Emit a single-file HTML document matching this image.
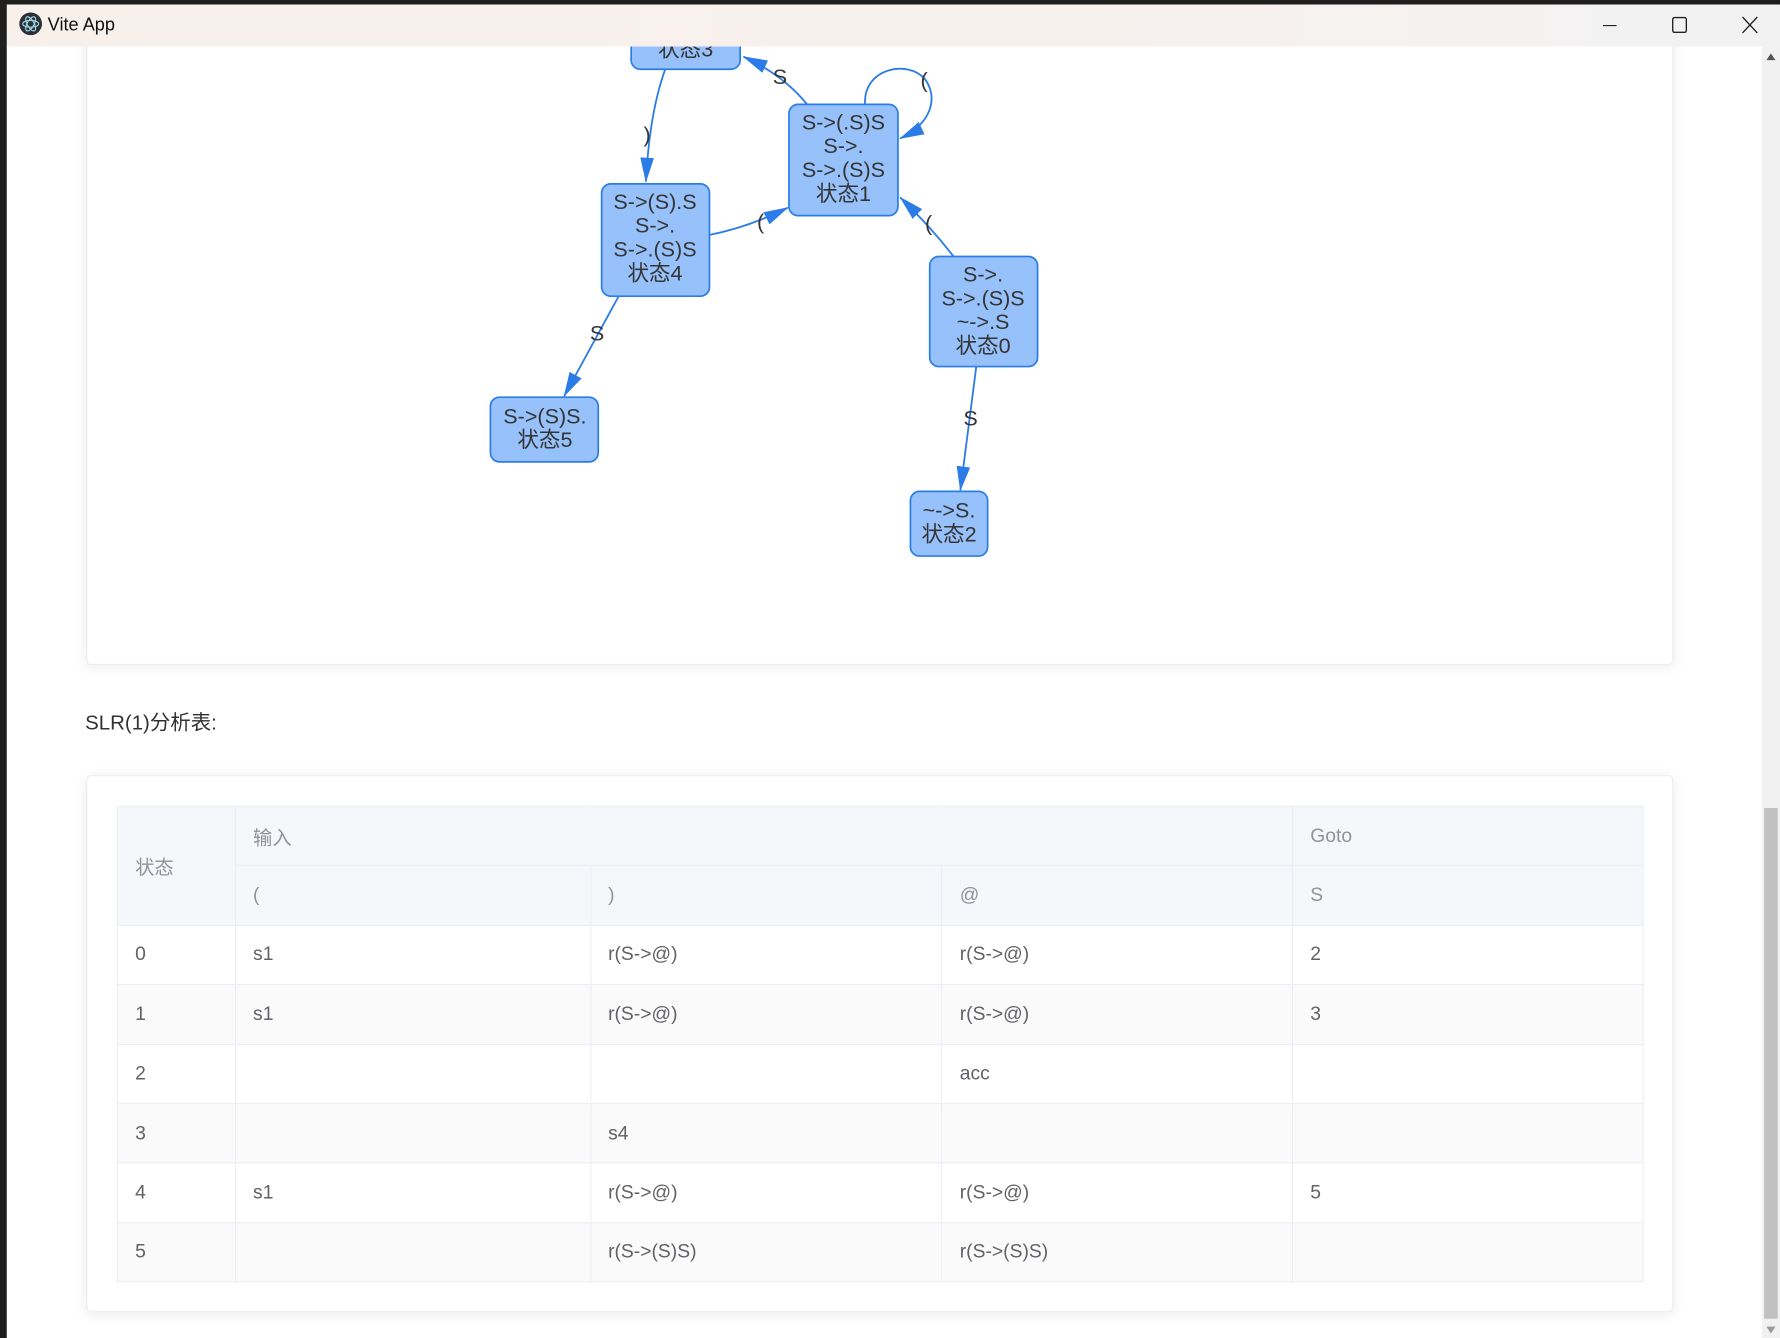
<!DOCTYPE html>
<html><head><meta charset="utf-8">
<style>
*{margin:0;padding:0;box-sizing:border-box}
html,body{width:1780px;height:1338px;overflow:hidden;background:#222}
#s{position:absolute;left:0;top:0;width:1568px;height:1179px;transform:scale(1.13520,1.13486);transform-origin:0 0;font-family:"Liberation Sans","Noto Sans CJK SC",sans-serif;background:#1f1f1f}
#win{position:absolute;left:6px;top:4px;right:0;bottom:0;background:#fff;overflow:hidden}
#title{position:absolute;left:0;top:0;right:0;height:37px;background:linear-gradient(90deg,#f8f0eb,#f7f1ee 60%,#f2f2f3);}
#title .t{position:absolute;left:36px;top:10px;font-size:16px;color:#111}
#title .ic{position:absolute;left:11px;top:7px;width:20px;height:20px;border-radius:50%;background:#2b2f36}
.ctl{position:absolute;top:0;height:37px;width:40px;color:#222}
#main{position:absolute;left:0;top:37px;right:16px;bottom:0;background:#fff}
.card{position:absolute;left:70px;width:1398px;background:#fff;border:1px solid #ebeef5;border-radius:4px;box-shadow:0 2px 12px rgba(0,0,0,.08)}
#sb{position:absolute;right:0;top:37px;width:16px;bottom:0;background:#f1f1f1}
#sb .th{position:absolute;left:2px;right:2px;top:671px;height:450px;background:#c1c1c1}
table{position:absolute;left:26px;top:26px;width:1345px;border-collapse:collapse;font-size:17px;font-family:"Liberation Sans","Noto Sans CJK SC",sans-serif}
td,th{border:1px solid #ebeef5;text-align:left;font-weight:normal;padding:0 0 0 15px;height:52.4px;color:#606266}
th{background:#f5f7fa;color:#909399}
tr.st td{background:#fafafa}
svg text{font-family:"Liberation Sans","Noto Sans CJK SC",sans-serif}
</style></head><body>
<div id="s">
<div id="win">
<div id="main">
 <div class="card" style="top:-40px;height:585px">
 <svg width="1398" height="585" style="position:absolute;left:-1px;top:-1px" viewBox="76 1 1398 585">
  <defs><marker id="a" markerWidth="22" markerHeight="12" refX="21" refY="6" orient="auto" markerUnits="userSpaceOnUse"><path d="M0,0 L22,6 L0,12 Z" fill="#2b7ce9"/></marker></defs>
  <g fill="none" stroke="#2b7ce9" stroke-width="1.6">
   <path d="M586,61 Q572,100 569,160" marker-end="url(#a)"/>
   <path d="M711,92 Q690,66 655,50" marker-end="url(#a)"/>
   <path d="M762,92 C760,60 800,52 815,70 C826,85 822,108 793,122" marker-end="url(#a)"/>
   <path d="M625,207 Q660,200 694,183" marker-end="url(#a)"/>
   <path d="M840,226 Q820,200 793,174" marker-end="url(#a)"/>
   <path d="M545,261 L497,349" marker-end="url(#a)"/>
   <path d="M860,323 L846,432" marker-end="url(#a)"/>
  </g>
  <g font-size="19" fill="#343434" text-anchor="middle">
   <rect x="556" y="10" width="96" height="51" rx="8" fill="#97c1fb" stroke="#2b7ce9" stroke-width="1.5"/>
   <text x="604" y="50">状态3</text>
   <rect x="695" y="92" width="96" height="98" rx="8" fill="#97c1fb" stroke="#2b7ce9" stroke-width="1.5"/>
   <text x="743" y="114">S-&gt;(.S)S</text><text x="743" y="135">S-&gt;.</text><text x="743" y="156">S-&gt;.(S)S</text><text x="743" y="177">状态1</text>
   <rect x="530" y="162" width="95" height="99" rx="8" fill="#97c1fb" stroke="#2b7ce9" stroke-width="1.5"/>
   <text x="577" y="184">S-&gt;(S).S</text><text x="577" y="205">S-&gt;.</text><text x="577" y="226">S-&gt;.(S)S</text><text x="577" y="247">状态4</text>
   <rect x="819" y="226" width="95" height="97" rx="8" fill="#97c1fb" stroke="#2b7ce9" stroke-width="1.5"/>
   <text x="866" y="248">S-&gt;.</text><text x="866" y="269">S-&gt;.(S)S</text><text x="866" y="290">~-&gt;.S</text><text x="866" y="311">状态0</text>
   <rect x="432" y="350" width="95" height="57" rx="8" fill="#97c1fb" stroke="#2b7ce9" stroke-width="1.5"/>
   <text x="480" y="373">S-&gt;(S)S.</text><text x="480" y="394">状态5</text>
   <rect x="802" y="433" width="68" height="57" rx="8" fill="#97c1fb" stroke="#2b7ce9" stroke-width="1.5"/>
   <text x="836" y="456">~-&gt;S.</text><text x="836" y="477">状态2</text>
   <text x="570" y="125">)</text>
   <text x="687" y="74">S</text>
   <text x="814" y="77">(</text>
   <text x="670" y="202">(</text>
   <text x="818" y="203">(</text>
   <text x="526" y="300">S</text>
   <text x="855" y="375">S</text>
  </g>
 </svg>
 </div>
 <div style="position:absolute;left:69px;top:582px;font-size:18px;color:#303133">SLR(1)分析表:</div>
 <div class="card" style="top:642px;height:473px">
  <table>
   <colgroup><col style="width:104px"><col style="width:313px"><col style="width:310px"><col style="width:309px"><col style="width:309px"></colgroup>
   <tr><th rowspan="2">状态</th><th colspan="3">输入</th><th>Goto</th></tr>
   <tr><th>(</th><th>)</th><th>@</th><th>S</th></tr>
   <tr><td>0</td><td>s1</td><td>r(S-&gt;@)</td><td>r(S-&gt;@)</td><td>2</td></tr>
   <tr class="st"><td>1</td><td>s1</td><td>r(S-&gt;@)</td><td>r(S-&gt;@)</td><td>3</td></tr>
   <tr><td>2</td><td></td><td></td><td>acc</td><td></td></tr>
   <tr class="st"><td>3</td><td></td><td>s4</td><td></td><td></td></tr>
   <tr><td>4</td><td>s1</td><td>r(S-&gt;@)</td><td>r(S-&gt;@)</td><td>5</td></tr>
   <tr class="st"><td>5</td><td></td><td>r(S-&gt;(S)S)</td><td>r(S-&gt;(S)S)</td><td></td></tr>
  </table>
 </div>
</div>
<div id="sb"><div style="position:absolute;left:4px;top:6px;width:0;height:0;border-left:4px solid transparent;border-right:4px solid transparent;border-bottom:6px solid #555"></div><div class="th"></div><div style="position:absolute;left:4px;bottom:4px;width:0;height:0;border-left:4px solid transparent;border-right:4px solid transparent;border-top:6px solid #999"></div></div>
<div id="title">
 <div class="ic"><svg width="20" height="20" viewBox="0 0 20 20"><g fill="none" stroke="#9fd6e8" stroke-width="1"><ellipse cx="10" cy="10" rx="7" ry="3" transform="rotate(60 10 10)"/><ellipse cx="10" cy="10" rx="7" ry="3" transform="rotate(-60 10 10)"/><ellipse cx="10" cy="10" rx="7" ry="3"/></g></svg></div>
 <div class="t">Vite App</div>
 <svg class="ctl" style="left:1392px" viewBox="0 0 40 37"><path d="M14,18.5 H26" stroke="#222" stroke-width="1"/></svg>
 <svg class="ctl" style="left:1453px" viewBox="0 0 40 37"><rect x="14.5" y="11.5" width="12" height="13" rx="1.5" fill="none" stroke="#222" stroke-width="1.2"/></svg>
 <svg class="ctl" style="left:1515px" viewBox="0 0 40 37"><path d="M14,11 L27,25 M27,11 L14,25" stroke="#222" stroke-width="1.2"/></svg>
</div>
</div>
</div>
</body></html>
